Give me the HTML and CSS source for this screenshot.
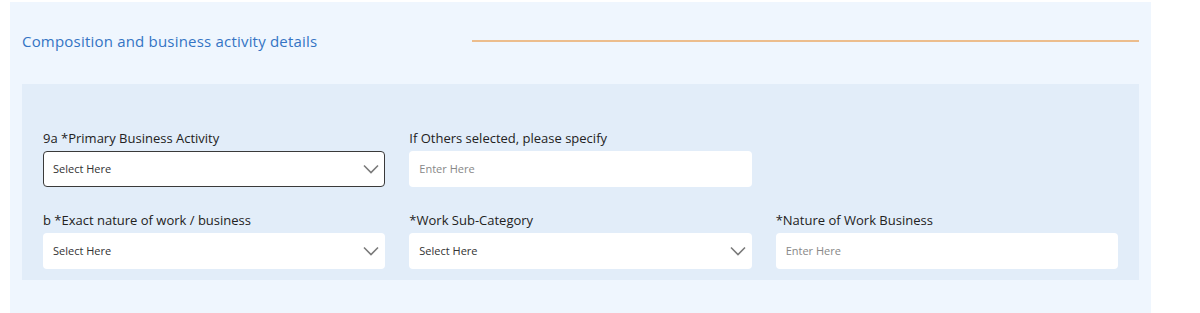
FILE: index.html
```html
<!DOCTYPE html>
<html>
<head>
<meta charset="utf-8">
<link rel="stylesheet" href="styles.css">
</head>
<body>
<section class="panel">
  <div class="header">
    <h2 class="title">Composition and business activity details</h2>
    <div class="rule"></div>
  </div>
  <div class="inner">
    <div class="field">
      <label class="label">9a *Primary Business Activity</label>
      <div class="control select focused">
        <span class="value">Select Here</span>
        <svg class="chev" width="16" height="10" viewBox="0 0 16 10"><path d="M1 1.5 L8 8.5 L15 1.5" fill="none" stroke="#7a7a7a" stroke-width="1.6"/></svg>
      </div>
    </div>
    <div class="field">
      <label class="label">If Others selected, please specify</label>
      <div class="control input"><span class="placeholder">Enter Here</span></div>
    </div>
    <div class="field"></div>
    <div class="field">
      <label class="label">b *Exact nature of work / business</label>
      <div class="control select">
        <span class="value">Select Here</span>
        <svg class="chev" width="16" height="10" viewBox="0 0 16 10"><path d="M1 1.5 L8 8.5 L15 1.5" fill="none" stroke="#7a7a7a" stroke-width="1.6"/></svg>
      </div>
    </div>
    <div class="field">
      <label class="label">*Work Sub-Category</label>
      <div class="control select">
        <span class="value">Select Here</span>
        <svg class="chev" width="16" height="10" viewBox="0 0 16 10"><path d="M1 1.5 L8 8.5 L15 1.5" fill="none" stroke="#7a7a7a" stroke-width="1.6"/></svg>
      </div>
    </div>
    <div class="field">
      <label class="label">*Nature of Work Business</label>
      <div class="control input"><span class="placeholder">Enter Here</span></div>
    </div>
  </div>
</section>
</body>
</html>
```
FILE: styles.css
```css
* { box-sizing: border-box; }
body {
  margin: 0;
  background: #ffffff;
  font-family: "Open Sans", "Noto Sans", sans-serif;
}
.panel {
  margin: 2px 0 0 10px;
  width: 1141px;
  height: 311px;
  padding: 0 12px;
  background: #eff6fe;
}
.header {
  height: 78px;
  margin-bottom: 4px;
  display: flex;
  align-items: center;
}
.title {
  flex: 0 0 450px;
  margin: 0;
  font-size: 15px;
  letter-spacing: 0.2px;
  font-weight: 500;
  color: #3474c4;
}
.rule {
  flex: 1;
  height: 2px;
  background: #ecbd8d;
}
.inner {
  background: #e2edf9;
  padding: 45px 21px 11px 21px;
  display: grid;
  grid-template-columns: repeat(3, 1fr);
  column-gap: 24px;
  row-gap: 24px;
}
.field {
  display: flex;
  flex-direction: column;
}
.label {
  font-size: 13px;
  line-height: 18px;
  color: #222;
  margin-bottom: 4px;
}
.control {
  height: 36px;
  background: #fff;
  border-radius: 4px;
  display: flex;
  align-items: center;
  padding: 0 6px 2px 10px;
  font-size: 11px;
}
.control.focused {
  border: 1px solid #3a3a3a;
  padding-left: 9px;
  padding-right: 5px;
}
.value { color: #333; flex: 1; }
.placeholder { color: #888; }
.chev { flex: none; margin-top: 2px; }
```
